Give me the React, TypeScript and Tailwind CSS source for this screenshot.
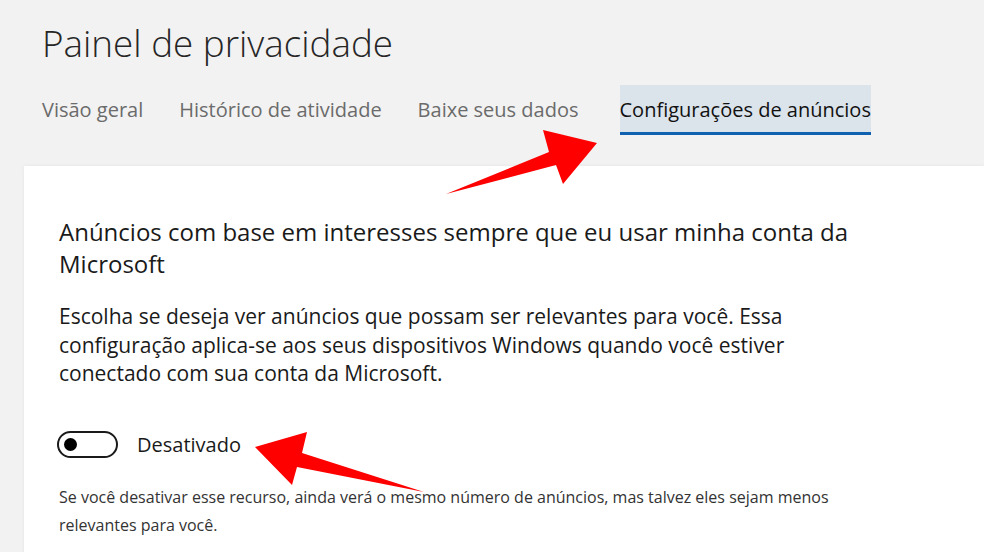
import React from 'react';

const tabs = [
  { label: 'Visão geral', active: false, gap: 'mr-[36px]' },
  { label: 'Histórico de atividade', active: false, gap: 'mr-[36px]' },
  { label: 'Baixe seus dados', active: false, gap: 'mr-[41px]' },
  { label: 'Configurações de anúncios', active: true, gap: '' },
];

const App: React.FC = () => {
  return (
    <div
      className="relative w-[984px] h-[552px] overflow-hidden bg-[#f2f2f2] text-[#1f1f1f]"
      style={{ fontFamily: '"Segoe UI", "Open Sans", "Noto Sans", sans-serif' }}
    >
      {/* Header */}
      <div className="pl-[42px] pt-[15px]">
        <h1 className="text-[36.8px] font-light leading-[56px] text-[#262626]">
          Painel de privacidade
        </h1>
        <nav className="flex mt-[14px]">
          {tabs.map((t) => (
            <div
              key={t.label}
              className={`h-[50px] flex items-center border-b-[3px] text-[20px] pt-[3px] ${t.gap} ${
                t.active
                  ? 'bg-[#dbe3eb] border-[#1061b0] text-[#111]'
                  : 'border-transparent text-[#6b6b6b]'
              }`}
            >
              {t.label}
            </div>
          ))}
        </nav>
      </div>

      {/* Card */}
      <div className="ml-[24px] mt-[31px] bg-white shadow-[0_0_4px_rgba(0,0,0,0.06)] pl-[35px] pt-[50px] h-[400px]">
        <div className="whitespace-nowrap">
          <h2 className="text-[24px] leading-[32px] text-[#1a1a1a]">
            Anúncios com base em interesses sempre que eu usar minha conta da
            <br />
            Microsoft
          </h2>
          <p className="mt-[22px] text-[21px] leading-[28.5px] text-[#1a1a1a]">
            Escolha se deseja ver anúncios que possam ser relevantes para você. Essa
            <br />
            configuração aplica-se aos seus dispositivos Windows quando você estiver
            <br />
            conectado com sua conta da Microsoft.
          </p>

          <div className="mt-[42px] -ml-[2px] flex items-center">
            <div className="w-[61px] h-[27px] rounded-full border-2 border-[#1a1a1a] flex items-center pl-[5px]">
              <div className="w-[13px] h-[13px] rounded-full bg-black" />
            </div>
            <span className="ml-[19px] text-[20px] text-[#1a1a1a]">Desativado</span>
          </div>

          <p className="mt-[23px] text-[16px] leading-[28px] text-[#333]">
            Se você desativar esse recurso, ainda verá o mesmo número de anúncios, mas talvez eles sejam menos
            <br />
            relevantes para você.
          </p>
        </div>
      </div>

      {/* Red annotation arrows */}
      <svg className="absolute inset-0 pointer-events-none" width="984" height="552">
        <polygon
          fill="#ff0000"
          points="446,194 549,152 543,130 597,143 563,184 556,165"
        />
        <polygon
          fill="#ff0000"
          points="255,447 307,432 302,453 424,492 297,467 292,485"
        />
      </svg>
    </div>
  );
};

export default App;
